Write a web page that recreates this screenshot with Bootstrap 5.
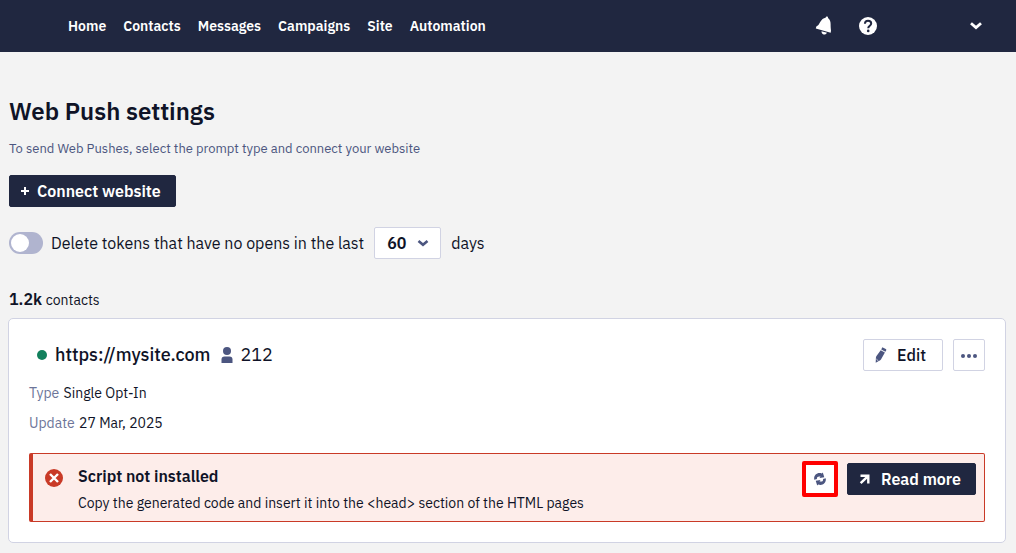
<!DOCTYPE html>
<html lang="en">
<head>
<meta charset="utf-8">
<meta name="viewport" content="width=device-width, initial-scale=1">
<title>Web Push settings</title>
<link rel="stylesheet" href="https://cdn.jsdelivr.net/npm/bootstrap@5.3.0/dist/css/bootstrap.min.css">
<style>
:root { --navy: #202740; --ink: #0f1327; --slate: #4c5680; --line: #d1d3e3; --danger: #c93a27; }
body { background: #f3f3f3; color: var(--ink); font-family: "IBM Plex Sans", Roboto, "Noto Sans", sans-serif; font-size: 16px; line-height: 24px; }
svg { display: block; flex: none; fill: currentColor; }
strong { font-weight: 600; }
.topbar { background: var(--navy); min-height: 52px; padding: 0 34px 0 68px; }
.topbar a, .icon-btn { color: #fff; text-decoration: none; }
.topbar a { font-size: 14px; font-weight: 600; line-height: 20px; }
.main-links { gap: 17px; }
.icon-btn { background: none; border: 0; padding: 0; }
.tools { gap: 26px; }
.account { margin-left: 67px; }
.page { padding: 43px 10px 10px 8px; }
h1 { font-size: 24px; font-weight: 600; line-height: 32px; margin: 0; }
.intro { color: var(--slate); font-size: 13px; line-height: 20px; margin: 12px 0 16px; }
.btn { --bs-btn-border-radius: 2px; --bs-btn-font-size: 16px; --bs-btn-line-height: 24px; --bs-btn-padding-y: 3px; min-height: 32px; display: inline-flex; align-items: center; }
.btn-navy { --bs-btn-color: #fff; --bs-btn-bg: var(--navy); --bs-btn-border-color: var(--navy); --bs-btn-hover-color: #fff; --bs-btn-hover-bg: #303956; padding-left: 11px; padding-right: 14px; font-weight: 600; }
.btn-line { --bs-btn-color: var(--ink); --bs-btn-bg: #fff; --bs-btn-border-color: var(--line); --bs-btn-hover-bg: #f3f3f8; --bs-btn-hover-border-color: var(--line); padding-right: 16px; padding-left: 11px; font-weight: 500; }
.btn svg, .person { color: var(--slate); }
.btn-navy svg { color: #fff; }
.gap-10 { gap: 10px; }
.indent { padding-left: 1px; }
.form-switch .form-check-input { width: 34px; height: 22px; margin: 0; border: 0; background-color: #b0b4cf; background-size: 22px 22px; float: none; --bs-form-switch-bg: url("data:image/svg+xml,%3csvg xmlns='http://www.w3.org/2000/svg' viewBox='0 0 22 22'%3e%3ccircle cx='11' cy='11' r='9' fill='%23fff'/%3e%3c/svg%3e"); }
.days-select { width: 67px; height: 32px; padding: 0 26px 0 12px; border-color: var(--line); border-radius: 2px; color: var(--ink); font-size: 16px; font-weight: 600; line-height: 24px; background-position: right 11px center; background-size: 12px 12px; --bs-form-select-bg-img: url("data:image/svg+xml,%3csvg xmlns='http://www.w3.org/2000/svg' viewBox='0 0 12 12'%3e%3cpath fill='none' stroke='%234c5680' stroke-width='2.6' d='M1.5 4 6 7.8 10.500 4'/%3e%3c/svg%3e"); }
.count { margin: 28px 0 7px; }
.text-14 { font-size: 14px; line-height: 20px; }
.site { border: 1px solid var(--line); border-radius: 5px; padding: 20px; color: var(--ink); }
.site-name { font-size: 18px; font-weight: 500; line-height: 26px; margin: 0; }
.site-head { padding-left: 8px; }
.status { width: 10px; height: 10px; border-radius: 50%; background: #12805c; margin-right: 8px; }
.person { margin: 0 7px 0 11px; }
.muted { color: #6d7599; margin-right: 1px; }
.details { margin: 12px 0 20px; gap: 10px; }
.notice { background: #fdedea; color: var(--ink); border: 1px solid var(--danger); border-left-width: 4px; border-radius: 2px; margin: 0; padding: 7px 8px 8px 12px; }
.notice h3 { font-size: 16px; font-weight: 600; line-height: 24px; margin: 3px 0 5px; }
.notice-icon { color: var(--danger); margin: 8px 15px 0 0; }
.notice-actions { gap: 9px; }
.refresh { width: 36px; height: 36px; border: 4px solid #f00; border-radius: 2px; background: #fff; color: var(--slate); padding: 0; }
</style>
</head>
<body>
<nav class="topbar d-flex align-items-center justify-content-between">
  <div class="main-links d-flex">
    <a href="#">Home</a><a href="#">Contacts</a><a href="#">Messages</a><a href="#">Campaigns</a><a href="#">Site</a><a href="#">Automation</a>
  </div>
  <div class="tools d-flex align-items-center">
    <button class="icon-btn" type="button" aria-label="Notifications"><svg width="18" height="20" viewBox="0 0 18 20"><path d="M11.500.5c1-.3 1.700.4 1.500 1.400 2 1.500 2.600 3.600 2.600 6.100 0 3 .2 5.100.4 6.500l-.3 2.200L.8 12.400l.5-1.900c1.600-.7 2.700-2.100 3.900-4.500C6.500 3.500 8.400 2.100 10.600 1.700c.1-.6.300-1 .9-1.200ZM6.500 15.300l5.500 1.500c-.8 1.400-2 2.100-3.400 1.700-1.400-.4-2.100-1.500-2.100-3.200Z"/></svg></button>
    <button class="icon-btn" type="button" aria-label="Help"><svg width="18" height="18" viewBox="0 0 18 18"><circle cx="9" cy="9" r="9"/><path d="M5.900 6.800C6 4.800 7.200 3.800 9 3.800s3.200 1 3.200 2.700c0 2.200-3 2.200-3 4.700" fill="none" stroke="#202740" stroke-width="2"/><circle cx="9.200" cy="13.900" r="1.300" fill="#202740"/></svg></button>
    <button class="icon-btn account" type="button" aria-label="Account"><svg width="12" height="12" viewBox="0 0 12 12"><path d="M1 3.200 6 7.600 11 3.200" fill="none" stroke="currentColor" stroke-width="2.800"/></svg></button>
  </div>
</nav>
<main class="page">
  <header class="indent">
    <h1>Web Push settings</h1>
    <p class="intro">To send Web Pushes, select the prompt type and connect your website</p>
    <button class="btn btn-navy gap-2" type="button"><svg width="8" height="8" viewBox="0 0 8 8"><path d="M3 0h2v3h3v2H5v3H3V5H0V3h3Z"/></svg>Connect website</button>
    <div class="d-flex align-items-center flex-wrap gap-10 mt-3 pt-1">
      <div class="form-check form-switch d-flex align-items-center gap-2 p-0 m-0">
        <input class="form-check-input" type="checkbox" role="switch" id="purge">
        <label for="purge">Delete tokens that have no opens in the last</label>
      </div>
      <select class="form-select days-select" id="days" aria-label="Number of days"><option>60</option><option>90</option></select>
      <label for="days">days</label>
    </div>
    <div class="count"><strong>1.2k</strong> <span class="text-14">contacts</span></div>
  </header>
  <section class="card site">
    <div class="site-head d-flex align-items-center">
      <span class="status"></span>
      <h2 class="site-name">https://mysite.com</h2>
      <svg class="person" width="12" height="16" viewBox="0 0 12 16"><circle cx="6" cy="4" r="4"/><path d="M.5 16v-3.500Q.5 9.500 3.500 9.500h5q3 0 3 3V16Z"/></svg>
      <span class="site-name fw-normal">212</span>
      <div class="ms-auto d-flex gap-10">
        <button class="btn btn-line gap-10" type="button"><svg width="12" height="16" viewBox="0 0 12 16"><path d="m7.800.4 3 1.700q.8.500.4 1.300l-.8 1.400-4.200-2.400.8-1.500q.3-.8.800-.5Zm-2.100 2.800 4.200 2.400-3.800 6.600q-.5.800-1.300 1.300L.7 15.800l.2-5.100q.1-.9.600-1.700Z"/><path d="m1.300 12 2.200 2.100" fill="none" stroke="#fff" stroke-width=".7"/></svg>Edit</button>
        <button class="btn btn-line p-0 justify-content-center" type="button" aria-label="More"><svg width="30" height="16" viewBox="0 0 30 16"><circle cx="9" cy="9" r="2"/><circle cx="15" cy="9" r="2"/><circle cx="21" cy="9" r="2"/></svg></button>
      </div>
    </div>
    <div class="details d-flex flex-column text-14">
      <div><span class="muted">Type</span> Single Opt-In</div>
      <div><span class="muted">Update</span> 27 Mar, 2025</div>
    </div>
    <div class="alert notice d-flex align-items-start" role="alert">
      <svg class="notice-icon" width="18" height="18" viewBox="0 0 18 18"><circle cx="9" cy="9" r="9"/><path d="m5 5 8 8m0-8-8 8" stroke="#fff" stroke-width="2.400"/></svg>
      <div>
        <h3>Script not installed</h3>
        <p class="text-14 mb-0">Copy the generated code and insert it into the &lt;head&gt; section of the HTML pages</p>
      </div>
      <div class="notice-actions ms-auto d-flex align-items-center">
        <button class="refresh d-flex align-items-center justify-content-center" type="button" aria-label="Check again"><svg width="14" height="14" viewBox="0 0 14 14"><path d="M1.300 7.800C.3 3.700 4-.2 8.800 1.500l1-.9 1.500 4.700-4.800.7 1-1.400C5 3.900 3.500 5.200 4 7Zm11.400-1.600c1 4.100-2.700 8-7.500 6.300l-1 .9-1.500-4.700 4.800-.7-1 1.400c2.500.7 4-.6 3.500-2.400Z"/></svg></button>
        <button class="btn btn-navy gap-10" type="button"><svg width="12" height="12" viewBox="0 0 12 12"><path d="M1.500 1.500h9v9H8.100V5.700L2.500 11 .8 9.300l5.500-5.400H1.500Z"/></svg>Read more</button>
      </div>
    </div>
  </section>
</main>
<script src="https://cdn.jsdelivr.net/npm/bootstrap@5.3.0/dist/js/bootstrap.bundle.min.js"></script>
</body>
</html>
